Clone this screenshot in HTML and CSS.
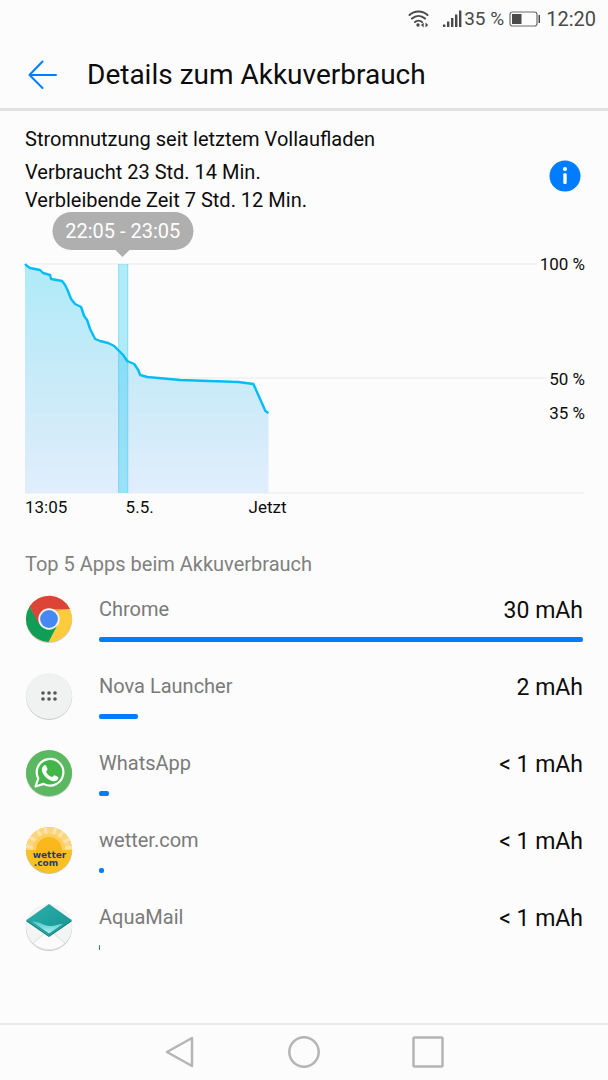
FILE: index.html
```html
<!DOCTYPE html>
<html lang="de">
<head>
<meta charset="utf-8">
<meta name="viewport" content="width=device-width, initial-scale=1">
<title>Details zum Akkuverbrauch</title>
<link rel="stylesheet" href="styles.css">
</head>
<body>
<div class="status">
  <svg class="status-wifi" width="22" height="18" viewBox="0 0 22 18" fill="none" stroke="#4a4a4a" stroke-width="2" stroke-linecap="round">
    <path d="M1.500 5C6.500 .2 14.500 .2 19.500 5M4 8.600C8 5 13 5 17 8.600M7 12C9 10.200 12 10.200 14 12"/>
    <circle cx="10" cy="15" r="1.700" fill="#4a4a4a" stroke="none"/>
    <path d="M15.700 12.600v4.800L13 15zM17.500 12.600v4.800L20.200 15z" fill="#4a4a4a" stroke="none"/>
  </svg>
  <svg class="status-signal" width="19" height="18" viewBox="0 0 19 18" fill="#4a4a4a">
    <path d="M0 14.500h2.400V17H0zM4 11.500h2.400V17H4zM8 8h2.400v9H8zM12 4.500h2.400V17H12zM16 .5h2.400V17H16z"/>
  </svg>
  <span class="status-percent">35 %</span>
  <svg class="status-battery" width="32" height="17" viewBox="0 0 32 17">
    <rect x="1" y="1" width="27" height="14" rx="2.500" fill="none" stroke="#6a6a6a" stroke-width="1.200"/>
    <path fill="#4a4a4a" d="M3 3h9.500v10H3zM29.500 4H31v8h-1.500z"/>
  </svg>
  <span class="status-time">12:20</span>
</div>

<header class="header">
  <button class="icon-button" type="button" aria-label="Zurück">
    <svg width="30" height="30" viewBox="0 0 30 30" fill="none" stroke="#007dff" stroke-width="2" stroke-linecap="round" stroke-linejoin="round"><path d="M15.500 1.500L2.500 15l13 13M2.500 15H29"/></svg>
  </button>
  <h1 class="title">Details zum Akkuverbrauch</h1>
</header>

<main class="content">
  <section class="summary">
    <div>
      <h2 class="summary-heading">Stromnutzung seit letztem Vollaufladen</h2>
      <p class="summary-line">Verbraucht 23 Std. 14 Min.</p>
      <p class="summary-line">Verbleibende Zeit 7 Std. 12 Min.</p>
    </div>
    <button class="icon-button info" type="button" aria-label="Info">
      <svg width="32" height="32" viewBox="0 0 32 32"><circle cx="16" cy="16" r="15.500" fill="#007dff"/><circle cx="16" cy="9" r="2" fill="#fff"/><rect x="14.300" y="13.300" width="3.400" height="10.700" rx="1.300" fill="#fff"/></svg>
    </button>
  </section>

  <section class="chart" aria-label="Akkustand">
    <div class="plot">
      <svg class="plot-svg" viewBox="0 0 558 229" preserveAspectRatio="none">
        <defs>
          <linearGradient id="level" x1="0" y1="0" x2="0" y2="1">
            <stop offset="0" stop-color="#afeaf8"/>
            <stop offset=".7" stop-color="#d2ebf9"/>
            <stop offset="1" stop-color="#e1eefc"/>
          </linearGradient>
        </defs>
        <path d="M0 0H558M0 114H558M0 229H558" stroke="#f0f0f0" stroke-width="1.500" fill="none"/>
        <path fill="url(#level)" d="M0 0L5 4L15 6L18 9L25 11L26 16L37 18L42 25L46 35L50 41L56 43L59 52L62 56L65 65L70 75L75 78L83 80L89 82L94 87L98 92L102 98L109 101L113 107L115 112L122 114L155 117L213 119L228 121L240 148L243 149V229H0z"/>
        <path fill="#00c3f0" fill-opacity=".3" d="M93 0H103V229H93z"/>
        <path d="M93.500 0V229M102.500 0V229" stroke="#2fbcf2" stroke-opacity=".3" fill="none"/>
        <path class="level-line" d="M0 0L2 2L5 4L15 6L18 9L25 11L26 15L37 17L40 21L42 25L46 35L50 40L56 43L59 52L62 56L65 65L70 75L75 77L83 79L89 82L94 87L98 91L102 97L109 100L113 106L115 111L122 113L155 116L213 118L228 120L240 147L243 149"/>
      </svg>
      <span class="level level-100">100 %</span>
      <span class="level level-50">50 %</span>
      <span class="level level-35">35 %</span>
      <span class="tooltip">22:05 - 23:05</span>
    </div>
    <div class="axis">
      <span>13:05</span>
      <span>5.5.</span>
      <span>Jetzt</span>
    </div>
  </section>

  <section>
    <h2 class="apps-heading">Top 5 Apps beim Akkuverbrauch</h2>
    <ul class="apps">
      <li class="app">
        <svg class="app-icon" viewBox="0 0 48 48">
          <circle cx="24" cy="24.700" r="23.200" fill="#c8c8c8"/>
          <circle cx="24" cy="24" r="23" fill="#fdcb3e"/>
          <path fill="#109d58" d="M4.600 11.600A23 23 0 0 0 23.500 47L33 29 15 29z"/>
          <path fill="#dc4437" d="M4.600 11.600A23 23 0 0 1 45 14H24L14 29z"/>
          <path fill="#c33b30" opacity=".35" d="M24 14h21l-14 2z"/>
          <circle cx="24" cy="24" r="10.700" fill="#f4f4f4"/>
          <circle cx="24" cy="24" r="8.900" fill="#4688f1"/>
        </svg>
        <div class="app-body">
          <div class="app-row"><span class="app-name">Chrome</span><span class="app-value">30 mAh</span></div>
          <div class="bar"><div class="bar-fill" style="width:100%"></div></div>
        </div>
      </li>
      <li class="app">
        <svg class="app-icon" viewBox="0 0 48 48">
          <circle cx="24" cy="24.700" r="23.200" fill="#c9cccc"/>
          <circle cx="24" cy="24" r="23" fill="#f0f2f2"/>
          <g fill="#555"><circle cx="18" cy="21" r="1.800"/><circle cx="24" cy="21" r="1.800"/><circle cx="30" cy="21" r="1.800"/><circle cx="18" cy="27" r="1.800"/><circle cx="24" cy="27" r="1.800"/><circle cx="30" cy="27" r="1.800"/></g>
        </svg>
        <div class="app-body">
          <div class="app-row"><span class="app-name">Nova Launcher</span><span class="app-value">2 mAh</span></div>
          <div class="bar"><div class="bar-fill" style="width:8%"></div></div>
        </div>
      </li>
      <li class="app">
        <svg class="app-icon" viewBox="0 0 48 48">
          <circle cx="24" cy="24.700" r="23.200" fill="#b9c4b9"/>
          <circle cx="24" cy="24" r="23" fill="#5cb860"/>
          <path fill="#43b649" stroke="#fff" stroke-width="2.200" stroke-linejoin="round" d="M10.500 37.500l2.800-8A13.300 13.300 0 1 1 18.600 34.900z"/>
          <path fill="#fff" d="M18.700 16.500c.8-.8 1.900-.7 2.300.1l1.500 3.500c.3.900-1.300 2-1.300 2.800 1.300 2.500 3.200 4.200 5.700 5.200.8.200 1.900-2.100 2.700-1.800l3.500 1.700c.8.600-.1 2.800-1.300 3.600-1.900 1.300-4.300.9-7.600-.9-3.300-1.900-5.800-4.700-6.900-7.800-.9-2.600-.3-4.900 1.400-6.400z"/>
        </svg>
        <div class="app-body">
          <div class="app-row"><span class="app-name">WhatsApp</span><span class="app-value">&lt; 1 mAh</span></div>
          <div class="bar"><div class="bar-fill" style="width:2%"></div></div>
        </div>
      </li>
      <li class="app">
        <svg class="app-icon" viewBox="0 0 48 48">
          <defs><clipPath id="sky"><path d="M1 24A23 23 0 0 1 47 24z"/></clipPath></defs>
          <circle cx="24" cy="24.700" r="23.200" fill="#c9c3b4"/>
          <circle cx="24" cy="24" r="23" fill="#fcc020"/>
          <g clip-path="url(#sky)">
            <path fill="#fcd67c" d="M0 0h48v24H0z"/>
            <path fill="none" stroke="#fbe3ae" stroke-width="3" d="M24 24L0 20M24 24L2 9M24 24L10 0M24 24L20 0M24 24L31 0M24 24L40 3M24 24L48 11M24 24L48 21"/>
            <circle cx="24" cy="24" r="16.500" fill="#fccf60"/>
          </g>
          <circle cx="24" cy="24" r="13" fill="#fbb81c"/>
          <text class="logo-text" x="24.500" y="31.500" text-anchor="middle">wetter</text>
          <text class="logo-text" x="21" y="39.500" text-anchor="middle">.com</text>
        </svg>
        <div class="app-body">
          <div class="app-row"><span class="app-name">wetter.com</span><span class="app-value">&lt; 1 mAh</span></div>
          <div class="bar"><div class="bar-fill" style="width:1%"></div></div>
        </div>
      </li>
      <li class="app">
        <svg class="app-icon" viewBox="0 0 48 48">
          <defs>
            <linearGradient id="flap" x1="0" y1="0" x2="1" y2="1"><stop offset="0" stop-color="#2cb0ac"/><stop offset="1" stop-color="#16938f"/></linearGradient>
            <linearGradient id="shine" x1="0" y1="0" x2="0" y2="1"><stop offset="0" stop-color="#55c9cb"/><stop offset="1" stop-color="#a8eef0"/></linearGradient>
          </defs>
          <circle cx="24" cy="24.700" r="23.200" fill="#c2c6c6"/>
          <circle cx="24" cy="24" r="23" fill="#f3f4f4"/>
          <path fill="#fbfbfb" stroke="#dcdede" d="M8 40L20 30l4 2.500 4-2.500 12 10C31 49 17 49 8 40z"/>
          <path fill="#0e7f7d" d="M1.500 16.500L24 32.500 46.500 16.500v2L24 34 1.500 18.500z"/>
          <path fill="url(#flap)" d="M24 1L46.500 17 24 32.500 1.500 17z"/>
          <path fill="url(#shine)" d="M7 18.500c7-.5 11 4 18 4.500 5 .3 9-2.500 13-2L24 30.500z"/>
        </svg>
        <div class="app-body">
          <div class="app-row"><span class="app-name">AquaMail</span><span class="app-value">&lt; 1 mAh</span></div>
          <div class="bar"><div class="bar-fill" style="width:0.2%"></div></div>
        </div>
      </li>
    </ul>
  </section>
</main>

<nav class="navbar">
  <button class="icon-button" type="button" aria-label="Zurück"><svg width="32" height="34" viewBox="0 0 32 34"><path d="M3 16L28 2v28z"/></svg></button>
  <button class="icon-button" type="button" aria-label="Startseite"><svg width="32" height="34" viewBox="0 0 32 34"><circle cx="16" cy="16" r="14.700"/></svg></button>
  <button class="icon-button" type="button" aria-label="Letzte Apps"><svg width="32" height="34" viewBox="0 0 32 34"><rect x="1.500" y="1.500" width="29" height="29" rx="1"/></svg></button>
</nav>
</body>
</html>
```
FILE: styles.css
```css
* {
  box-sizing: border-box;
}

body {
  margin: 0;
  min-height: 100vh;
  display: flex;
  flex-direction: column;
  background: #fcfcfc;
  color: #0c0c0c;
  font-family: Roboto, "Liberation Sans", sans-serif;
  font-size: 20px;
  line-height: 28px;
}

h1, h2, p, ul {
  margin: 0;
  padding: 0;
  font-weight: 400;
}

svg {
  display: block;
}

.icon-button {
  padding: 0;
  border: 0;
  background: none;
  line-height: 0;
}

.status {
  display: flex;
  align-items: center;
  justify-content: flex-end;
  height: 38px;
  padding: 0 12px 0 0;
  color: #4a4a4a;
}

.status-wifi {
  margin-right: 13px;
}

.status-signal {
  margin-right: 2px;
}

.status-percent {
  margin-right: 5px;
  font-size: 19px;
}

.status-battery {
  margin-right: 5px;
}

.header {
  display: flex;
  align-items: center;
  gap: 30px;
  height: 73px;
  padding: 3px 24px 0 27px;
  border-bottom: 3px solid #e1e1e1;
}

.title {
  font-size: 28px;
  line-height: 36px;
}

.content {
  flex: 1;
  padding: 14px 24px 0 25px;
}

.summary {
  display: flex;
  justify-content: space-between;
}

.summary-heading {
  margin-bottom: 5px;
  font-size: 20px;
}

.info {
  align-self: flex-end;
  margin: 0 3px 22px 0;
}

.plot {
  position: relative;
  height: 229px;
  margin-top: 50px;
}

.plot-svg {
  width: 100%;
  height: 100%;
  overflow: visible;
}

.level-line {
  fill: none;
  stroke: #00bdf6;
  stroke-width: 2.4;
  stroke-linejoin: round;
}

.level {
  position: absolute;
  right: -1px;
  padding-left: 3px;
  background: #fcfcfc;
  font-size: 17px;
  line-height: 20px;
  transform: translateY(-50%);
}

.level-100 {
  top: 0;
}

.level-50 {
  top: 50%;
}

.level-35 {
  top: 65%;
}

.tooltip {
  position: absolute;
  left: 17.5%;
  bottom: 100%;
  margin-bottom: 14px;
  padding: 0 13px;
  border-radius: 19px;
  background: #afafaf;
  color: #fff;
  line-height: 38px;
  white-space: nowrap;
  transform: translateX(-50%);
}

.tooltip::after {
  content: "";
  position: absolute;
  top: 100%;
  left: 50%;
  border: 7px solid transparent;
  border-top-color: #afafaf;
  border-bottom: 0;
  transform: translateX(-50%);
}

.axis {
  display: grid;
  grid-template-columns: 18% 22% 1fr;
  margin-bottom: 29px;
  font-size: 17px;
}

.apps-heading {
  margin-bottom: 17px;
  color: #808080;
  font-size: 20px;
}

.apps {
  list-style: none;
}

.app {
  display: flex;
  gap: 26px;
  height: 77px;
}

.app-icon {
  flex: none;
  width: 48px;
  height: 48px;
}

.app-body {
  flex: 1;
  padding-right: 1px;
}

.app-row {
  display: flex;
  justify-content: space-between;
  margin-bottom: 10px;
}

.app-name {
  color: #7a7a7a;
}

.app-value {
  font-size: 23px;
  line-height: 32px;
}

.bar-fill {
  height: 5px;
  border-radius: 2px;
  background: #007dff;
}

.logo-text {
  fill: #1c3c7c;
  font-family: "DejaVu Sans", sans-serif;
  font-size: 9px;
  font-weight: 700;
}

.navbar {
  display: flex;
  justify-content: center;
  align-items: center;
  gap: 92px;
  height: 57px;
  border-top: 2px solid #e9e9e9;
}

.navbar svg {
  fill: none;
  stroke: #b5b5b5;
  stroke-width: 2.5;
  stroke-linejoin: round;
}
```
